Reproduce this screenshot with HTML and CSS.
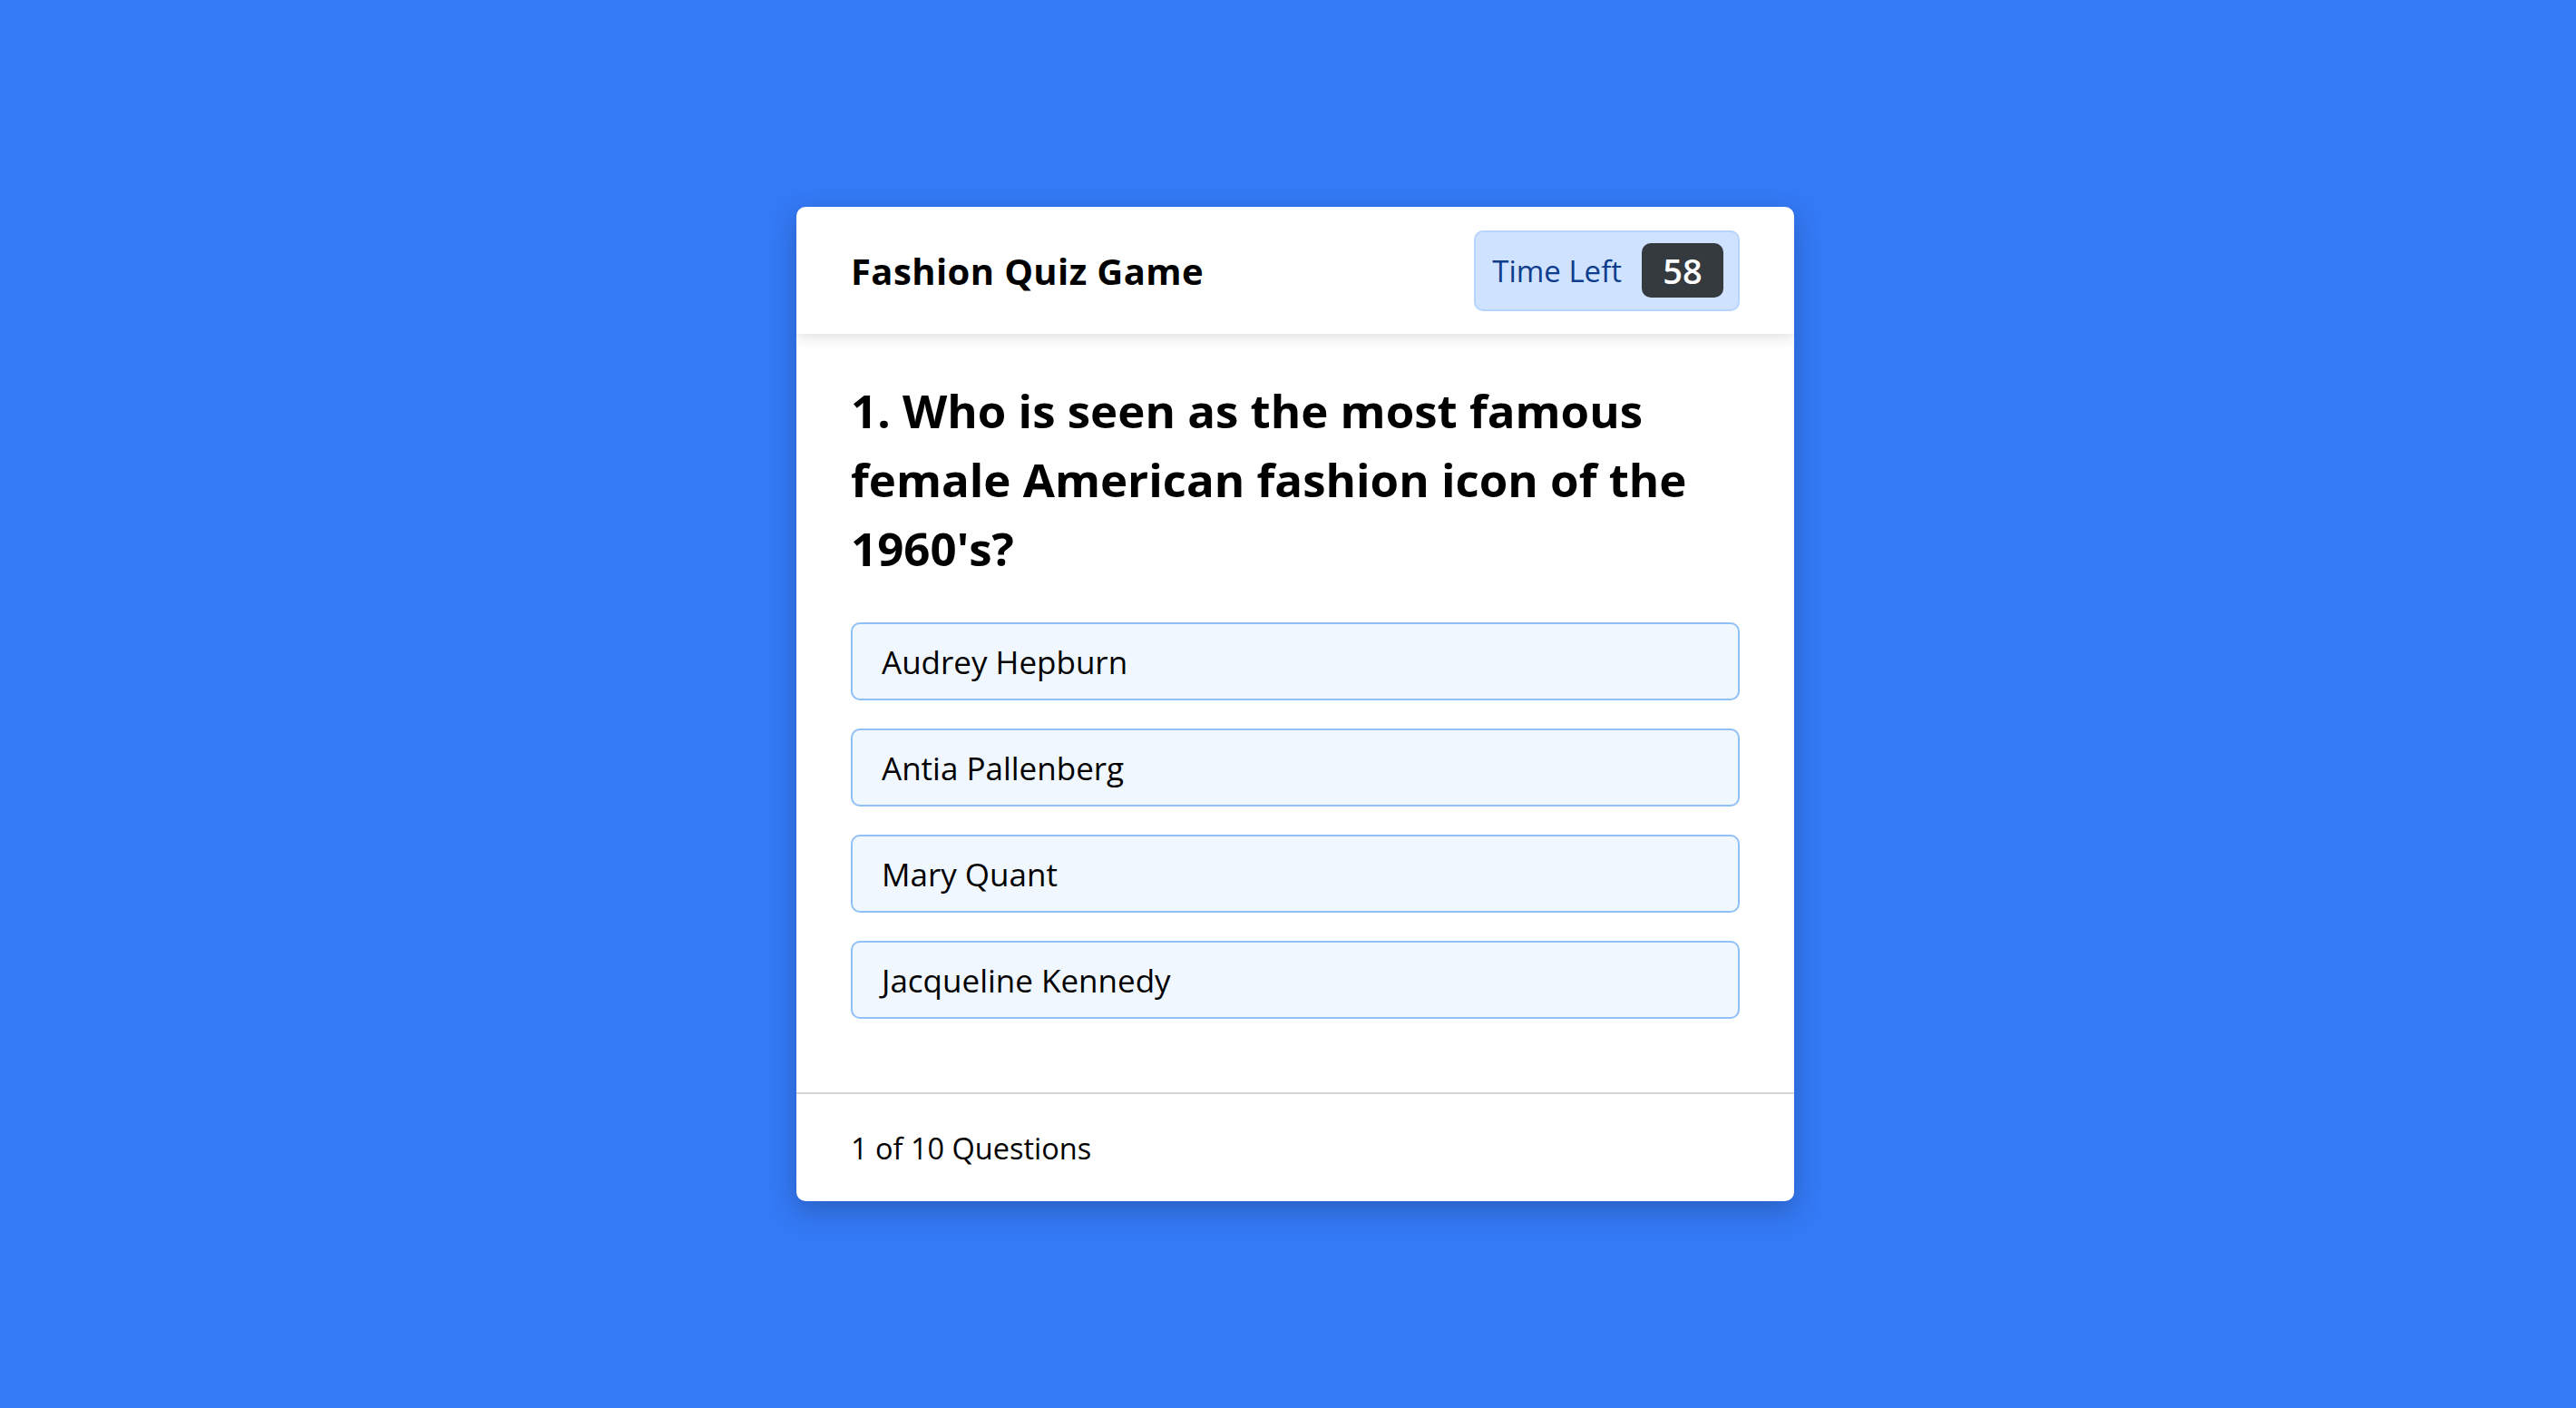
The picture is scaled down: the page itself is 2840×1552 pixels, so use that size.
FILE: index.html
```html
<!DOCTYPE html>
<html lang="en">
<head>
<meta charset="utf-8">
<title>Fashion Quiz Game</title>
<link rel="stylesheet" href="styles.css">
</head>
<body>
<main class="stage">
  <section class="card">
    <header class="card-header">
      <h1 class="title">Fashion Quiz Game</h1>
      <div class="timer">
        <span class="timer-label">Time Left</span>
        <span class="timer-badge">58</span>
      </div>
    </header>
    <div class="card-body">
      <h2 class="question">1. Who is seen as the most famous female American fashion icon of the 1960's?</h2>
      <ul class="options">
        <li class="option">Audrey Hepburn</li>
        <li class="option">Antia Pallenberg</li>
        <li class="option">Mary Quant</li>
        <li class="option">Jacqueline Kennedy</li>
      </ul>
    </div>
    <footer class="card-footer">
      <p class="progress">1 of 10 Questions</p>
    </footer>
  </section>
</main>
</body>
</html>
```

FILE: styles.css
```css
* { box-sizing: border-box; }

html, body {
  margin: 0;
  padding: 0;
}

body {
  background: #3479f5;
  font-family: "Open Sans", "Noto Sans", sans-serif;
  color: #000;
}

.stage {
  height: 1552px;
  display: flex;
  align-items: center;
  justify-content: center;
  padding-left: 16px;
}

.card {
  width: 1100px;
  height: 1096px;
  background: #fff;
  border-radius: 10px;
  box-shadow: 0 10px 30px rgba(0, 0, 0, 0.22);
  display: flex;
  flex-direction: column;
  overflow: hidden;
}

.card-header {
  height: 140px;
  flex: none;
  padding: 0 60px;
  display: flex;
  align-items: center;
  justify-content: space-between;
  box-shadow: 0 4px 14px rgba(0, 0, 0, 0.12);
  position: relative;
  z-index: 1;
}

.title {
  margin: 0;
  font-size: 40px;
  font-weight: 700;
  letter-spacing: 0.4px;
}

.timer {
  display: flex;
  align-items: center;
  gap: 22px;
  height: 89px;
  padding: 0 16px 0 18px;
  background: #cfe2ff;
  border: 2px solid #b6d4fe;
  border-radius: 10px;
}

.timer-label {
  color: #0d3d8c;
  font-size: 33px;
}

.timer-badge {
  width: 90px;
  height: 60px;
  display: flex;
  align-items: center;
  justify-content: center;
  background: #353a3f;
  color: #fff;
  border-radius: 10px;
  font-size: 38px;
  font-weight: 600;
}

.card-body {
  flex: 1;
  padding: 46px 60px 0;
}

.question {
  margin: 0 0 44px;
  font-size: 51px;
  line-height: 76px;
  font-weight: 700;
}

.options {
  list-style: none;
  margin: 0;
  padding: 0;
  display: flex;
  flex-direction: column;
  gap: 31px;
}

.option {
  height: 86px;
  display: flex;
  align-items: center;
  padding: 0 32px;
  background: #f0f7fe;
  border: 2px solid #8fc0f8;
  border-radius: 10px;
  font-size: 35px;
}

.card-footer {
  flex: none;
  height: 120px;
  border-top: 2px solid #d5d5d5;
  display: flex;
  align-items: center;
  padding: 0 60px;
}

.progress {
  margin: 0;
  font-size: 32.5px;
}
```
